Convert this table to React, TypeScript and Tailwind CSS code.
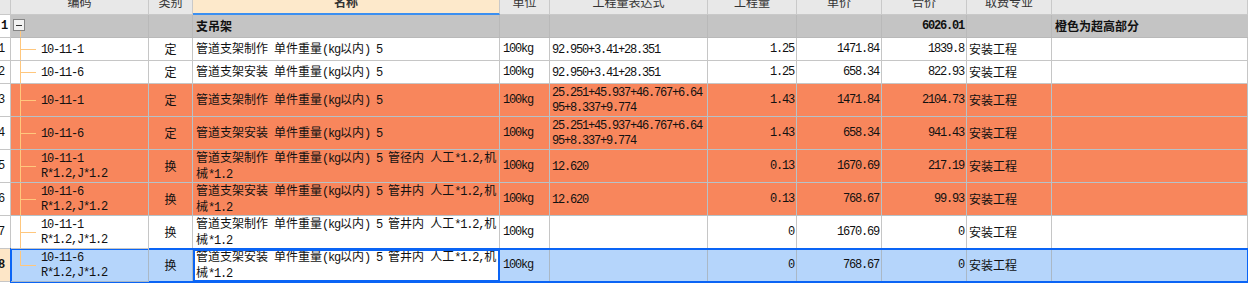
import React from "react";

type Tone = "white" | "orange" | "sel";

type Row = {
  n: string;
  code: string[];
  kind: string;
  name: string[];
  unit: string;
  expr: string[];
  qty: string;
  price: string;
  total: string;
  spec: string;
  tone: Tone;
  tall: boolean;
};

const rows: Row[] = [
  { n: "1.1", code: ["10-11-1"], kind: "定", name: ["管道支架制作 单件重量(kg以内) 5"], unit: "100kg", expr: ["92.950+3.41+28.351"], qty: "1.25", price: "1471.84", total: "1839.8", spec: "安装工程", tone: "white", tall: false },
  { n: "1.2", code: ["10-11-6"], kind: "定", name: ["管道支架安装 单件重量(kg以内) 5"], unit: "100kg", expr: ["92.950+3.41+28.351"], qty: "1.25", price: "658.34", total: "822.93", spec: "安装工程", tone: "white", tall: false },
  { n: "1.3", code: ["10-11-1"], kind: "定", name: ["管道支架制作 单件重量(kg以内) 5"], unit: "100kg", expr: ["25.251+45.937+46.767+6.64", "95+8.337+9.774"], qty: "1.43", price: "1471.84", total: "2104.73", spec: "安装工程", tone: "orange", tall: true },
  { n: "1.4", code: ["10-11-6"], kind: "定", name: ["管道支架安装 单件重量(kg以内) 5"], unit: "100kg", expr: ["25.251+45.937+46.767+6.64", "95+8.337+9.774"], qty: "1.43", price: "658.34", total: "941.43", spec: "安装工程", tone: "orange", tall: true },
  { n: "1.5", code: ["10-11-1", "R*1.2,J*1.2"], kind: "换", name: ["管道支架制作 单件重量(kg以内) 5 管径内 人工*1.2,机", "械*1.2"], unit: "100kg", expr: ["12.620"], qty: "0.13", price: "1670.69", total: "217.19", spec: "安装工程", tone: "orange", tall: true },
  { n: "1.6", code: ["10-11-6", "R*1.2,J*1.2"], kind: "换", name: ["管道支架安装 单件重量(kg以内) 5 管井内 人工*1.2,机", "械*1.2"], unit: "100kg", expr: ["12.620"], qty: "0.13", price: "768.67", total: "99.93", spec: "安装工程", tone: "orange", tall: true },
  { n: "1.7", code: ["10-11-1", "R*1.2,J*1.2"], kind: "换", name: ["管道支架制作 单件重量(kg以内) 5 管井内 人工*1.2,机", "械*1.2"], unit: "100kg", expr: [], qty: "0", price: "1670.69", total: "0", spec: "安装工程", tone: "white", tall: true },
  { n: "1.8", code: ["10-11-6", "R*1.2,J*1.2"], kind: "换", name: ["管道支架安装 单件重量(kg以内) 5 管井内 人工*1.2,机", "械*1.2"], unit: "100kg", expr: [], qty: "0", price: "768.67", total: "0", spec: "安装工程", tone: "sel", tall: true },
];

// ascii runs in a narrow mono, cjk runs in Noto CJK
function Txt({ s }: { s: string }) {
  const parts = s.split(/([\x20-\x7e]+)/);
  return (
    <>
      {parts.map((p, i) =>
        p === "" ? null : i % 2 === 1 ? (
          <span key={i} className="font-['Liberation_Mono'] tracking-[-1.2px]">{p}</span>
        ) : (
          <span key={i} className="font-['Noto_Sans_CJK_SC']">{p}</span>
        )
      )}
    </>
  );
}

function Lines({ lines }: { lines: string[] }) {
  return (
    <div className="flex flex-col whitespace-pre">
      {lines.map((l, i) => (
        <div key={i}>
          <Txt s={l} />
        </div>
      ))}
    </div>
  );
}

const headers = ["编码", "类别", "名称", "单位", "工程量表达式", "工程量", "单价", "合价", "取费专业", ""];
const widths = ["w-[138px]", "w-[44px]", "w-[307px]", "w-[50px]", "w-[158px]", "w-[89px]", "w-[85px]", "w-[85px]", "w-[85px]", "flex-1"];

function TreeLines({ last }: { last?: boolean }) {
  return (
    <>
      <span className={`absolute left-[9px] w-px bg-[#ffc77d] ${last ? "top-[2px] h-[14px]" : "top-0 h-full"}`} />
      <span className="absolute left-[9px] top-1/2 h-px w-[16px] bg-[#ffc77d]" />
    </>
  );
}

function DataRow({ r, last }: { r: Row; last: boolean }) {
  const h = r.tall ? "h-[33px]" : "h-[23px]";
  const bg = r.tone === "orange" ? "bg-[#f8865c]" : r.tone === "sel" ? "bg-[#b5d5fb]" : "bg-white";
  const bc = r.tone === "orange" ? "border-[#b6c2c8]" : r.tone === "sel" ? "border-[#aab8c6]" : "border-[#c6c6c6]";
  const cell = `shrink-0 h-full flex items-center overflow-hidden border-r border-b ${bc}`;
  return (
    <div className={`flex ${h}`}>
      <div
        className={`w-[11px] shrink-0 h-full flex items-center justify-end pr-[6px] overflow-hidden border-r border-b border-[#c6c6c6] ${
          r.tone === "sel" ? "bg-[#fde6c7] font-bold" : "bg-white"
        }`}
      >
        <span className="font-['Liberation_Mono'] tracking-[-1.2px] whitespace-nowrap">{r.n}</span>
      </div>
      <div className={`flex flex-1 ${bg} ${r.tone === "sel" ? "outline-2 outline-[#0a64f5] -outline-offset-1" : ""}`}>
        <div className={`${cell} w-[138px] relative pl-[30px]`}>
          <TreeLines last={last} />
          <Lines lines={r.code} />
        </div>
        <div className={`${cell} w-[44px] justify-center`}>
          <Txt s={r.kind} />
        </div>
        <div
          className={`${cell} w-[307px] pl-[3px] ${
            r.tone === "sel" ? "bg-white outline-2 outline-[#0a64f5] -outline-offset-2" : ""
          }`}
        >
          <Lines lines={r.name} />
        </div>
        <div className={`${cell} w-[50px] pl-[3px]`}>
          <Txt s={r.unit} />
        </div>
        <div className={`${cell} w-[158px] pl-[2px]`}>
          <Lines lines={r.expr} />
        </div>
        <div className={`${cell} w-[89px] justify-end pr-[2px]`}>
          <Txt s={r.qty} />
        </div>
        <div className={`${cell} w-[85px] justify-end pr-[2px]`}>
          <Txt s={r.price} />
        </div>
        <div className={`${cell} w-[85px] justify-end pr-[2px]`}>
          <Txt s={r.total} />
        </div>
        <div className={`${cell} w-[85px] pl-[2px]`}>
          <Txt s={r.spec} />
        </div>
        <div className={`${cell} flex-1`} />
      </div>
    </div>
  );
}

export default function App() {
  return (
    <div className="w-[1248px] h-[297px] bg-white overflow-hidden text-[12px] leading-[14px] text-[#111]">
      {/* header, scrolled so the labels are half cut off */}
      <div className="flex h-[15px] bg-[#e8e8e8]">
        <div className="w-[11px] shrink-0 h-full border-r border-b border-[#c9c9c9]" />
        {headers.map((t, i) => (
          <div
            key={i}
            className={`${widths[i]} shrink-0 h-full flex justify-center overflow-hidden border-r ${
              i === 2 ? "bg-[#fde9cb] border-b-2 border-b-[#3b8ff0] border-r-[#c9c9c9] font-bold" : "border-b border-[#c9c9c9]"
            }`}
          >
            <span className="-mt-[4px] leading-[12px] text-[#333]">
              <Txt s={t} />
            </span>
          </div>
        ))}
      </div>

      {/* group row */}
      <div className="flex h-[23px] font-bold">
        <div className="w-[11px] shrink-0 h-full flex items-center justify-start pl-px bg-white border-r border-b border-[#c6c6c6]">
          <span className="font-['Liberation_Mono'] tracking-[-1.2px]">1</span>
        </div>
        <div className="flex flex-1 bg-[#c4c4c4]">
          <div className="relative w-[138px] shrink-0 h-full flex items-center pl-[2px] border-r border-b border-[#b9b9b9]">
            <span className="absolute left-[9px] top-[16px] bottom-0 w-px bg-[#ffc77d]" />
            <div className="relative w-[12px] h-[12px] -mt-[2px] border border-[#858585] bg-[#f2f2f2] flex items-center justify-center">
              <span className="w-[6px] h-px bg-[#333]" />
            </div>
          </div>
          <div className="w-[44px] shrink-0 h-full border-r border-b border-[#b9b9b9]" />
          <div className="w-[307px] shrink-0 h-full flex items-center pl-[3px] border-r border-b border-[#b9b9b9]">
            <Txt s="支吊架" />
          </div>
          <div className="w-[50px] shrink-0 h-full border-r border-b border-[#b9b9b9]" />
          <div className="w-[158px] shrink-0 h-full border-r border-b border-[#b9b9b9]" />
          <div className="w-[89px] shrink-0 h-full border-r border-b border-[#b9b9b9]" />
          <div className="w-[85px] shrink-0 h-full border-r border-b border-[#b9b9b9]" />
          <div className="w-[85px] shrink-0 h-full flex items-center justify-end pr-[2px] border-r border-b border-[#b9b9b9]">
            <Txt s="6026.01" />
          </div>
          <div className="w-[85px] shrink-0 h-full border-r border-b border-[#b9b9b9]" />
          <div className="flex-1 h-full flex items-center pl-[3px] border-b border-[#b9b9b9]">
            <Txt s="橙色为超高部分" />
          </div>
        </div>
      </div>

      {rows.map((r, i) => (
        <DataRow key={r.n} r={r} last={i === rows.length - 1} />
      ))}
    </div>
  );
}
